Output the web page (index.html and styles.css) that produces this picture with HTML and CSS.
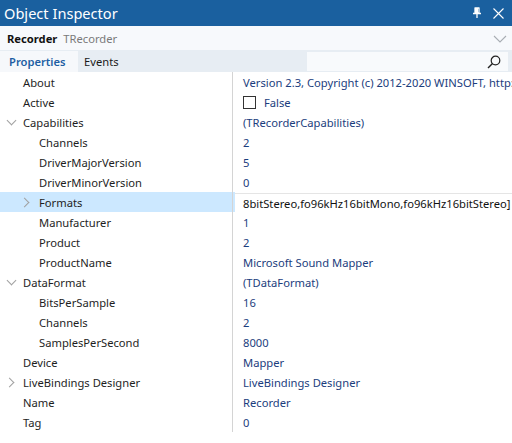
FILE: index.html
```html
<!DOCTYPE html>
<html>
<head>
<meta charset="utf-8">
<link rel="stylesheet" href="styles.css">
</head>
<body>
<div class="win">
  <div class="title">
    <span class="title-text">Object Inspector</span>
    <span class="title-icons">
      <svg width="10" height="12" viewBox="0 0 10 12"><path d="M2.5 1h5M3 1v5h4V1M1 6.5h8M5 6.5V11" stroke="#fff" stroke-width="1.3" fill="none"/><rect x="3" y="1" width="3" height="5" fill="#fff"/></svg>
      <svg width="11" height="11" viewBox="0 0 11 11"><path d="M0.5 0.5l10 10M10.5 0.5l-10 10" stroke="#fff" stroke-width="1.1"/></svg>
    </span>
  </div>
  <div class="objbar">
    <span class="objname">Recorder</span><span class="objtype">TRecorder</span>
    <svg class="combo" width="14" height="8" viewBox="0 0 14 8"><path d="M1 1l6 6 6-6" stroke="#a8adb3" stroke-width="1.1" fill="none"/></svg>
  </div>
  <div class="tabs">
    <span class="tab active">Properties</span>
    <span class="tab">Events</span>
    <span class="search">
      <svg width="14" height="14" viewBox="0 0 14 14"><circle cx="8.5" cy="5.5" r="4.3" stroke="#222" stroke-width="1.2" fill="none"/><path d="M5.5 8.5L1 13" stroke="#222" stroke-width="1.4"/></svg>
    </span>
  </div>
  <div class="grid">
    <div class="row"><div class="name l0">About</div><div class="val">Version 2.3, Copyright (c) 2012-2020 WINSOFT, http://www.winsoft.sk</div></div>
    <div class="row"><div class="name l0">Active</div><div class="val"><span class="check"></span>False</div></div>
    <div class="row"><div class="name l0"><span class="exp down"></span>Capabilities</div><div class="val">(TRecorderCapabilities)</div></div>
    <div class="row"><div class="name l1">Channels</div><div class="val">2</div></div>
    <div class="row"><div class="name l1">DriverMajorVersion</div><div class="val">5</div></div>
    <div class="row"><div class="name l1">DriverMinorVersion</div><div class="val">0</div></div>
    <div class="row sel"><div class="name l1"><span class="exp right"></span>Formats</div><div class="val edit"><span class="edit-text">8bitStereo,fo96kHz16bitMono,fo96kHz16bitStereo]</span></div></div>
    <div class="row"><div class="name l1">Manufacturer</div><div class="val">1</div></div>
    <div class="row"><div class="name l1">Product</div><div class="val">2</div></div>
    <div class="row"><div class="name l1">ProductName</div><div class="val">Microsoft Sound Mapper</div></div>
    <div class="row"><div class="name l0"><span class="exp down"></span>DataFormat</div><div class="val">(TDataFormat)</div></div>
    <div class="row"><div class="name l1">BitsPerSample</div><div class="val">16</div></div>
    <div class="row"><div class="name l1">Channels</div><div class="val">2</div></div>
    <div class="row"><div class="name l1">SamplesPerSecond</div><div class="val">8000</div></div>
    <div class="row"><div class="name l0">Device</div><div class="val">Mapper</div></div>
    <div class="row"><div class="name l0"><span class="exp right"></span>LiveBindings Designer</div><div class="val">LiveBindings Designer</div></div>
    <div class="row"><div class="name l0">Name</div><div class="val">Recorder</div></div>
    <div class="row"><div class="name l0">Tag</div><div class="val">0</div></div>
  </div>
</div>
</body>
</html>
```
FILE: styles.css
```css
* { box-sizing: border-box; }
html, body { margin: 0; padding: 0; background: #fff; }
body { font-family: "Segoe UI", "Noto Sans", "Open Sans", sans-serif; font-size: 11.2px; color: #1e1e1e; }
.win { width: 512px; height: 443px; overflow: hidden; background: #fff; }
.title { height: 26px; background: #1a609f; color: #fff; display: flex; align-items: center; justify-content: space-between; padding: 0 8px 0 4px; }
.title-text { font-size: 14.6px; line-height: 26px; }
.title-icons { display: flex; align-items: center; gap: 11px; }
.objbar { height: 24px; background: #f7f9fc; display: flex; align-items: center; padding: 0 7px; }
.objname { font-weight: bold; color: #111; }
.objtype { color: #7a7a7a; margin-left: 6px; }
.combo { margin-left: auto; margin-right: -2px; margin-top: 2px; }
.tabs { height: 22px; background: #e7edf3; display: flex; align-items: stretch; padding-top: 1px; }
.tab { display: flex; align-items: center; padding: 0 0 0 6px; width: 70px; color: #1a1a1a; }
.tab.active { background: #f6f8fb; color: #1e5fa3; font-weight: 600; width: 78px; padding-left: 9px; }
.search { margin-left: auto; margin-right: 4px; width: 201px; margin-top: 1px; margin-bottom: 1px; background: #f8fafc; display: flex; align-items: center; justify-content: flex-end; padding-right: 7px; }
.row { height: 20px; display: flex; align-items: center; }
.name { width: 233px; height: 20px; display: flex; align-items: center; position: relative; border-right: 1px solid #d4d4d4; white-space: nowrap; }
.name.l0 { padding-left: 23px; }
.name.l1 { padding-left: 39px; }
.val { flex: 1; min-width: 0; height: 20px; display: flex; align-items: center; padding-left: 10px; color: #1b3d7d; white-space: nowrap; overflow: hidden; }
.row.sel .name { background: #cce8ff; }
.val.edit { padding-left: 0; border-left: 2px solid #cce8ff; }
.edit-text { display: flex; align-items: center; height: 19px; margin-top: 1px; width: 100%; border-top: 1px solid #e5e5e5; padding-left: 8px; color: #111; background: #fff; }
.check { display: inline-block; width: 13px; height: 13px; border: 1px solid #333; margin-right: 8px; background: #fff; }
.exp { position: absolute; width: 7px; height: 7px; border-right: 1px solid #a0a0a0; border-bottom: 1px solid #a0a0a0; }
.exp.down { left: 8px; top: 5px; transform: rotate(45deg); }
.exp.right { left: 21px; top: 7px; transform: rotate(-45deg); }
.l0 .exp.right { left: 6px; }
```
